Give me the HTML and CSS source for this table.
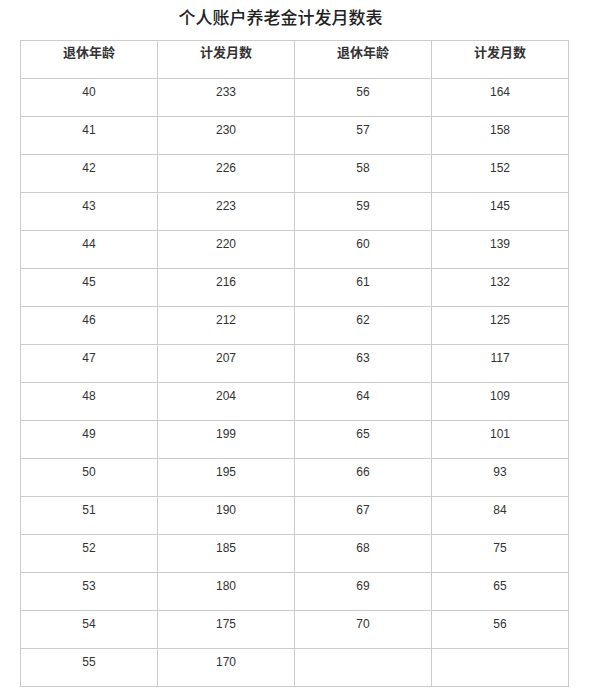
FILE: index.html
```html
<!DOCTYPE html>
<html lang="zh-CN">
<head>
<meta charset="utf-8">
<title>个人账户养老金计发月数表</title>
<link rel="stylesheet" href="styles.css">
</head>
<body>
<div class="page">
  <h1 class="title">个人账户养老金计发月数表</h1>
  <table class="months">
    <colgroup><col class="c"><col class="c"><col class="c"><col class="c"></colgroup>
    <thead>
      <tr><th>退休年龄</th><th>计发月数</th><th>退休年龄</th><th>计发月数</th></tr>
    </thead>
    <tbody>
      <tr><td>40</td><td>233</td><td>56</td><td>164</td></tr>
      <tr><td>41</td><td>230</td><td>57</td><td>158</td></tr>
      <tr><td>42</td><td>226</td><td>58</td><td>152</td></tr>
      <tr><td>43</td><td>223</td><td>59</td><td>145</td></tr>
      <tr><td>44</td><td>220</td><td>60</td><td>139</td></tr>
      <tr><td>45</td><td>216</td><td>61</td><td>132</td></tr>
      <tr><td>46</td><td>212</td><td>62</td><td>125</td></tr>
      <tr><td>47</td><td>207</td><td>63</td><td>117</td></tr>
      <tr><td>48</td><td>204</td><td>64</td><td>109</td></tr>
      <tr><td>49</td><td>199</td><td>65</td><td>101</td></tr>
      <tr><td>50</td><td>195</td><td>66</td><td>93</td></tr>
      <tr><td>51</td><td>190</td><td>67</td><td>84</td></tr>
      <tr><td>52</td><td>185</td><td>68</td><td>75</td></tr>
      <tr><td>53</td><td>180</td><td>69</td><td>65</td></tr>
      <tr><td>54</td><td>175</td><td>70</td><td>56</td></tr>
      <tr><td>55</td><td>170</td><td></td><td></td></tr>
    </tbody>
  </table>
</div>
</body>
</html>
```

FILE: styles.css
```css
html, body {
  margin: 0;
  padding: 0;
  background: #fff;
}
.page {
  padding: 7px 0 0 20px;
  font-family: "Liberation Sans", "Noto Sans CJK SC", sans-serif;
  color: #333;
}
.title {
  width: 521px;
  margin: 0;
  text-align: center;
  font-family: "Noto Sans CJK SC", sans-serif;
  font-size: 17px;
  line-height: 20px;
  font-weight: 500;
  color: #222;
}
.months {
  margin-top: 13px;
  width: 549px;
  table-layout: fixed;
  border-collapse: collapse;
  border: 1px solid #ccc;
}
.months .c {
  width: 137px;
}
.months th,
.months td {
  border: 1px solid #ccc;
  height: 38px;
  padding: 5px 0 0;
  vertical-align: top;
  text-align: center;
  line-height: 16px;
  box-sizing: border-box;
}
.months th {
  padding-top: 3px;
  font-family: "Noto Sans CJK SC", sans-serif;
  font-size: 13px;
  font-weight: bold;
  color: #333;
}
.months td {
  font-size: 12px;
  color: #333;
}
```
